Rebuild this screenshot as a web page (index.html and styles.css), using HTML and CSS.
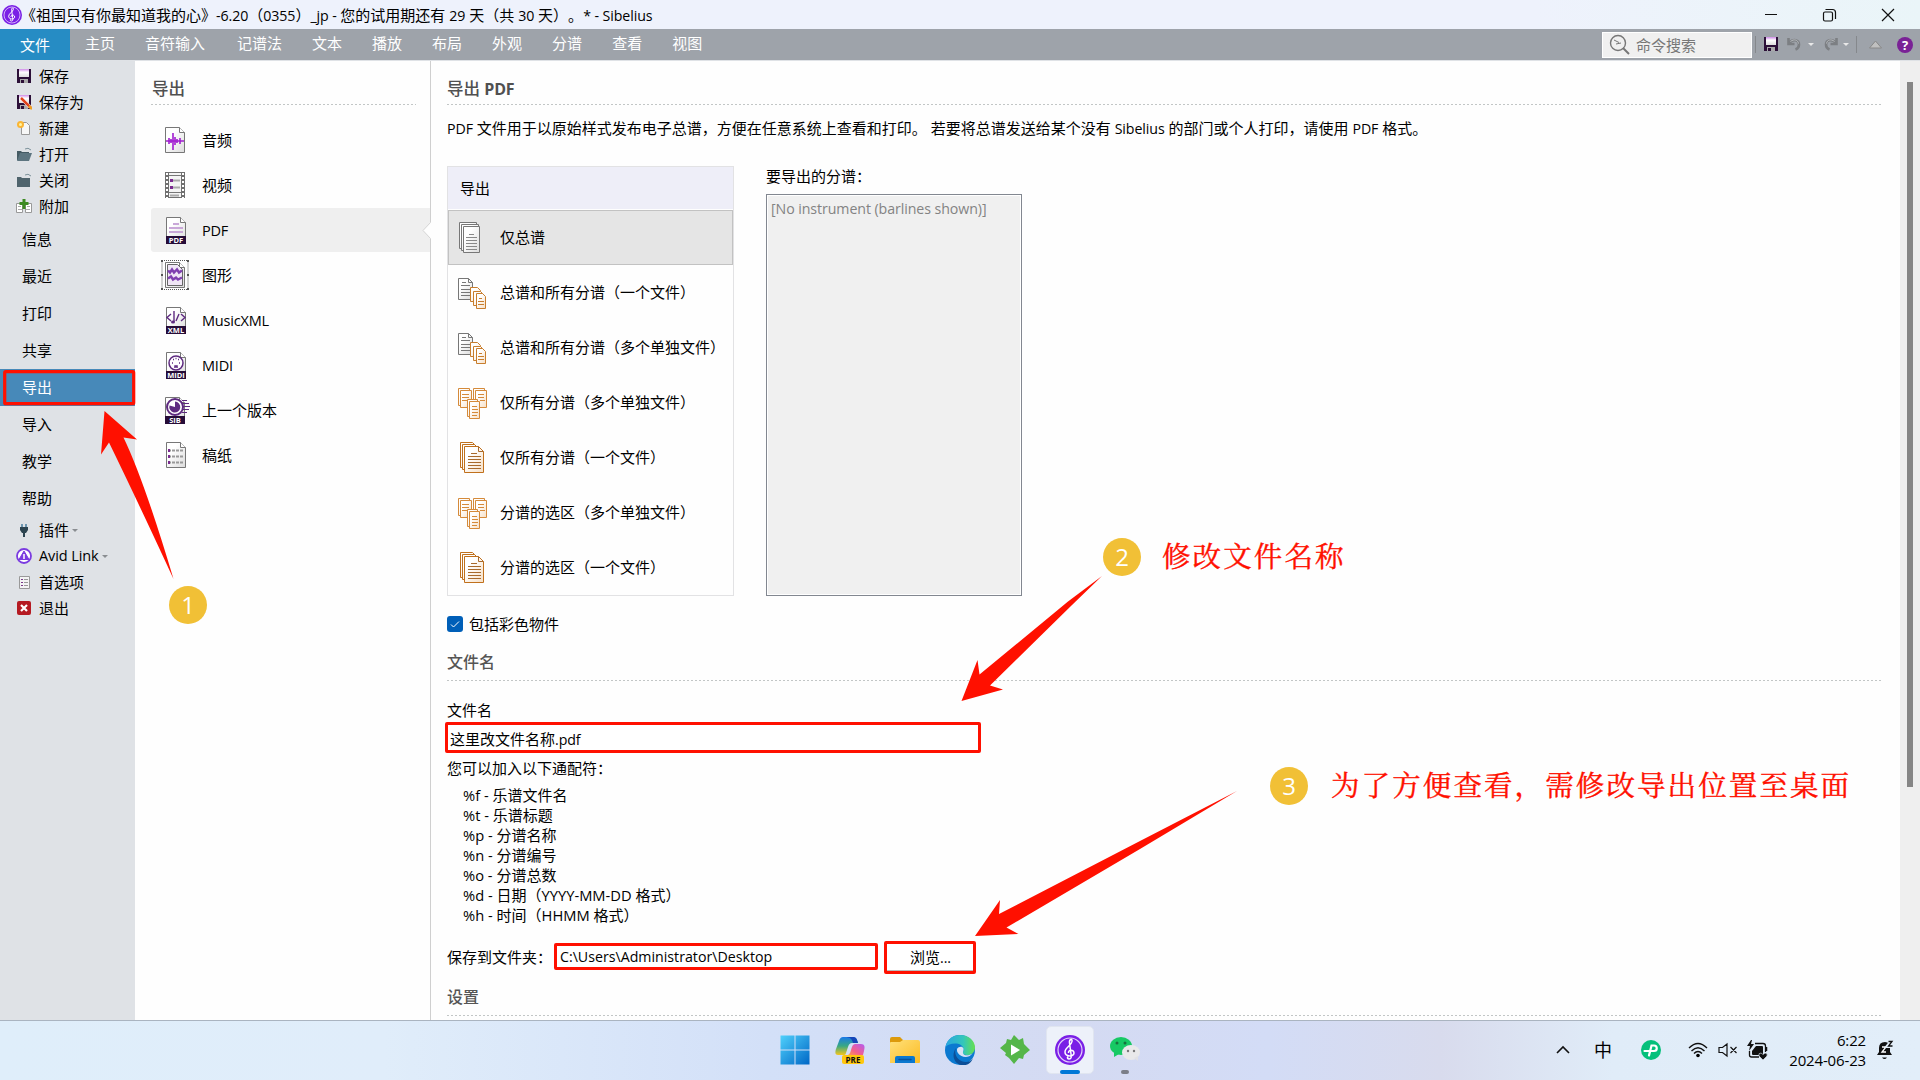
FILE: index.html
```html
<!DOCTYPE html>
<html lang="zh-CN">
<head>
<meta charset="utf-8">
<title>Sibelius</title>
<link rel="stylesheet" href="styles.css">
</head>
<body>
<svg class="defs" width="0" height="0" aria-hidden="true">
  <defs>
    <linearGradient id="paper" x1="0" y1="0" x2="1" y2="1"><stop offset=".3" stop-color="#fff"/><stop offset="1" stop-color="#dcdcdc"/></linearGradient>
    <linearGradient id="peach" x1="0" y1="0" x2="1" y2="1"><stop offset=".3" stop-color="#fff"/><stop offset="1" stop-color="#f6dfc6"/></linearGradient>
    <linearGradient id="win" x1="0" y1="0" x2="1" y2="1"><stop offset="0" stop-color="#4fd0fb"/><stop offset="1" stop-color="#0067c6"/></linearGradient>
    <linearGradient id="label" x1="0" y1="0" x2="0" y2="1"><stop offset="0" stop-color="#d08be8"/><stop offset=".4" stop-color="#fff"/><stop offset="1" stop-color="#ddd"/></linearGradient>
    <symbol id="save" viewBox="0 0 14 14"><path d="M0 0h14v14H0z" fill="#2c1038"/><path d="M2 0h10v8H2z" fill="url(#label)"/><path d="M3 10h8v4H3z" fill="#aaa"/><path d="M4 11h3v3H4z" fill="#2c1038"/></symbol>
    <symbol id="page" viewBox="0 0 20 26"><path d="M.5.5h14l5 5v20H.5z" fill="url(#paper)" stroke="#777"/><path d="M14.5.5v5h5" fill="#fff" stroke="#777"/></symbol>
    <symbol id="clef" viewBox="0 0 30 30"><circle cx="15" cy="15" r="15" fill="#7a1fe6"/><circle cx="15" cy="15" r="12" fill="none" stroke="#e3d0fb" stroke-width="1.2"/><path d="M14 24c-2 0-2-2-.5-2.500M14 24c2.500 0 2.500-2 2-5L14.500 8c-.5-4 3-5 2.500-1.500-.5 4-7 6-7 10.500 0 5 9 5 9 1 0-4-6-3.500-5.500 0" fill="none" stroke="#fff" stroke-width="1.500"/></symbol>
    <symbol id="graysheet" viewBox="0 0 32 32"><g fill="url(#paper)" stroke="#777"><path d="M2.500.5h17v26h-17z"/><path d="M4.500 2.500h17v26h-17z"/><path d="M6.500 4.500h16v26h-16z"/></g><path d="M12 12.500h5M9 15.500h11M9 18.500h11M9 21.500h11M9 24.500h11M9 27.500h11" stroke="#888"/></symbol>
    <symbol id="mixed" viewBox="0 0 32 32"><path d="M1.500 1.500h10l4 4v17h-14z" fill="url(#paper)" stroke="#777"/><path d="M11.500 1.500v4h4M5 5.500h4M4 8.500h9M4 12.500h9M4 15.500h9M4 18.500h9" fill="none" stroke="#777"/><g fill="url(#peach)" stroke="#c87e2e"><path d="M13.500 10.500h7l3 3v11h-10z"/><path d="M16.500 14.500h7l3 3v11h-10z"/><path d="M19.500 16.500h6l3 3v12h-9z"/></g><path d="M22 21.500h3M21 24.500h6M21 27.500h6" stroke="#c87e2e"/></symbol>
    <symbol id="trio" viewBox="0 0 32 32"><g fill="url(#peach)" stroke="#d58a3a"><path d="M1.500 1.500h11v17h-11z"/><path d="M3.500 3.500h11v17h-11z"/><path d="M16.500 1.500h11v17h-11z"/><path d="M18.500 3.500h11v17h-11z"/><path d="M10.500 12.500h10v17h-10z"/><path d="M12.500 14.500h10v17h-10z"/></g><path d="M5 7.500h7M5 10.500h7M5 13.500h5M21 7.500h6M21 10.500h6M23 13.500h5M15 19.500h5M15 22.500h6M15 25.500h6M15 28.500h5" stroke="#d58a3a"/></symbol>
    <symbol id="orangesheet" viewBox="0 0 32 32"><g fill="url(#peach)" stroke="#c0701c"><path d="M3.500.5h12l4 4v21h-16z"/><path d="M5.500 2.500h12l4 4v21h-16z"/><path d="M7.500 4.500h14l5 5v21h-19z"/></g><path d="M21.500 4.500v5h5M14 11.500h6M11 14.500h13M11 17.500h13M11 20.500h13M11 23.500h13M11 26.500h13" fill="none" stroke="#a86a2c"/></symbol>
    <symbol id="undo" viewBox="0 0 14 14"><path d="M1.500 1v6h6M2.500 5.500C6 1.500 12 3 12 7.500c0 2-1 4-3.500 5" fill="none" stroke="#7c7f83" stroke-width="2.600"/><path d="M3.500 4.500C7 1.500 11 3 11.500 6.500" fill="none" stroke="#b9bcbf"/></symbol>
  </defs>
</svg>

<div class="window">
  <header class="titlebar">
    <svg class="app-logo" width="20" height="20"><use href="#clef"/></svg>
    <div class="title">《祖国只有你最知道我的心》<span class="lat">-6.20</span>（<span class="lat">0355</span>）<span class="lat">_jp - </span>您的试用期还有 <span class="lat">29</span> 天（共 <span class="lat">30</span> 天）。<span class="lat">* - Sibelius</span></div>
    <svg class="win-buttons" width="134" height="16" viewBox="0 0 134 16" fill="none" stroke="#111" stroke-width="1.200"><path d="M0 7.500h12M117 2l12 12M129 2l-12 12"/><rect x="58.500" y="5" width="9" height="9" rx="1.500"/><path d="M60.500 2.500h7a3 3 0 0 1 3 3v6.500"/></svg>
  </header>

  <nav class="ribbon">
    <div class="tab active">文件</div><div class="tab">主页</div><div class="tab wide">音符输入</div><div class="tab">记谱法</div><div class="tab">文本</div><div class="tab">播放</div><div class="tab">布局</div><div class="tab">外观</div><div class="tab">分谱</div><div class="tab">查看</div><div class="tab">视图</div>
    <div class="search">
      <svg width="22" height="22" viewBox="0 0 22 22" fill="none" stroke="#777"><circle cx="9" cy="9" r="7.500" stroke-width="1.400"/><path d="M14 14l6 6" stroke-width="2"/><path d="M5 6l5 2.500M7 10l5-1"/></svg>
      <span>命令搜索</span>
    </div>
    <svg class="quick" width="164" height="30" viewBox="0 0 164 30">
      <path d="M1.500 7v17M102.500 7v17" stroke="#85888c"/>
      <use href="#save" x="10" y="8" width="14" height="14"/>
      <use href="#undo" x="33" y="8" width="14" height="14"/><path d="M54 14h6l-3 3z" fill="#e8e8e8"/>
      <use href="#undo" x="-84" y="8" width="14" height="14" transform="scale(-1 1)"/><path d="M89 14h6l-3 3z" fill="#e8e8e8"/>
      <path d="M115.500 19h12l-6-7z" fill="#c0c0c0" stroke="#888"/>
      <circle cx="151" cy="16" r="8" fill="#7a2296"/><text x="151" y="21" class="help">?</text>
    </svg>
  </nav>

  <div class="body">
    <aside class="sidebar">
      <div class="cmd"><svg width="16" height="16"><use href="#save" x="1" y="1" width="14" height="14"/></svg>保存</div>
      <div class="cmd"><svg width="16" height="16"><use href="#save" x="1" y="1" width="14" height="14"/><path d="M5 4l9 9" stroke="#fff" stroke-width="3.500"/><path d="M5 4l10 10" stroke="#e0431c" stroke-width="2.500"/><path d="M13 12l3 3" stroke="#f0a020" stroke-width="2.500"/></svg>保存为</div>
      <div class="cmd"><svg width="16" height="16"><path d="M5.500 2.500h5l3 3v9h-8z" fill="#f7f7f7" stroke="#999"/><circle cx="4.500" cy="4.500" r="3.500" fill="#fbb534"/><circle cx="4.500" cy="4.500" r="1.500" fill="#fff3a0"/></svg>新建</div>
      <div class="cmd"><svg width="16" height="16"><path d="M1 5h4l1 1h7v8H1z" fill="#455b64"/><path d="M4 7h12l-3 8H1z" fill="#5d7580"/><path d="M9 3q3-2 6 1" fill="none" stroke="#7d929b"/></svg>打开</div>
      <div class="cmd"><svg width="16" height="16"><path d="M1 5h4l1 1h8v9H1z" fill="#4f646d"/><path d="M9 3q3-2 6 1" fill="none" stroke="#7d929b"/></svg>关闭</div>
      <div class="cmd"><svg width="16" height="16"><path d="M.5 5.500h6v9h-6zM9.500 5.500h6v9h-6z" fill="#fff" stroke="#999"/><path d="M2 8.500h3M2 11.500h4M11 8.500h3M10 11.500h4" stroke="#aaa"/><path d="M8 1v10M3.500 5.500h9" stroke="#3c8a22" stroke-width="3"/></svg>附加</div>
      <div class="section first">信息</div>
      <div class="section">最近</div>
      <div class="section">打印</div>
      <div class="section">共享</div>
      <div class="section current">导出</div>
      <div class="section">导入</div>
      <div class="section">教学</div>
      <div class="section">帮助</div>
      <div class="cmd"><svg width="16" height="16"><path d="M6 2v3M10 2v3" stroke="#4a7fa0" stroke-width="1.500"/><path d="M4 5h8v3l-2 3H6L4 8z" fill="#2d4450"/><path d="M8 10v5" stroke="#2d4450" stroke-width="2"/></svg>插件<i class="caret"></i></div>
      <div class="cmd"><svg width="16" height="16"><circle cx="8" cy="8" r="7" fill="#fff" stroke="#7b3be0" stroke-width="1.800"/><path d="M8 3l5 8.500H3z" fill="#7b3be0" stroke="#7b3be0"/><path d="M8 6v5" stroke="#fff" stroke-width="1.500"/></svg><span class="avid">Avid Link</span><i class="caret"></i></div>
      <div class="cmd"><svg width="16" height="16"><path d="M3.500 2.500h10v12h-10z" fill="#f4f4f4" stroke="#999"/><path d="M5 5.500h2M5 8.500h2M5 11.500h2" stroke="#7a3a8a"/><path d="M8 5.500h4M8 8.500h4M8 11.500h4" stroke="#999"/></svg>首选项</div>
      <div class="cmd"><svg width="16" height="16"><rect x="1" y="1" width="14" height="14" rx="2" fill="#b51a22"/><path d="M5 5l6 6M11 5l-6 6" stroke="#fff" stroke-width="2.200"/></svg>退出</div>
    </aside>

    <section class="formats">
      <h2>导出</h2>
      <div class="dash"></div>
      <ul>
        <li><svg width="30" height="32"><use href="#page" x="5" y="3" width="20" height="26"/><path d="M6 17h18M9 14v6M11 15v4M13 9v17M15 13v8M17 15v4M20 14v6" stroke="#a01cd0" stroke-width="1.600"/></svg>音频</li>
        <li><svg width="30" height="32"><path d="M5 3h20v26H5z" fill="#707070"/><path d="M9 4h12v24H9z" fill="#f4f4f4"/><path d="M7 4v25M23 4v25" stroke="#fff" stroke-width="2" stroke-dasharray="2 2"/><path d="M9 6.500h12M9 23.500h12" stroke="#777"/><path d="M10 11.500h10M10 18.500h10M10 26.500h9" stroke="#aaa" stroke-width="2"/><path d="M10 11.500h3M10 18.500h3" stroke="#7a2a90" stroke-width="3"/></svg>视频</li>
        <li class="selected"><svg width="30" height="32"><use href="#page" x="6" y="3" width="20" height="26"/><path d="M13 10h6M9 14h14M9 18h14" stroke="#c9a8d8" stroke-width="2"/><path d="M6 22h20v8H6z" fill="#260c38"/><text x="16" y="29" class="tag">PDF</text></svg><span>PDF</span></li>
        <li><svg width="30" height="32"><path d="M2 1.500h26v29H2z" fill="none" stroke="#555" stroke-dasharray="1 1"/><path d="M1 1h2v2H1zM27 1h2v2h-2zM1 15h2v2H1zM27 15h2v2h-2zM1 29h2v2H1zM27 29h2v2h-2z" fill="#555"/><use href="#page" x="5" y="3" width="20" height="26"/><path d="M7.500 5.500h10l5 5v16h-15z" fill="#f0e6f6" stroke="#666"/><path d="M8 11.500l2 2 2-3 2 3 3-3 2 3 3-2M8 19.500l3-2 2 3 3-2 2 2 4-2" fill="none" stroke="#8040b0" stroke-width="2.400"/></svg>图形</li>
        <li><svg width="30" height="32"><use href="#page" x="6" y="3" width="20" height="26"/><path d="M11 10l-4 3.500 4 3.500M21 10l4 3.500-4 3.500M19 10l-3 7M14 7v11" fill="none" stroke="#5e2a80" stroke-width="1.400"/><ellipse cx="13" cy="18" rx="2" ry="1.500" fill="#5e2a80"/><path d="M6 22h20v8H6z" fill="#260c38"/><text x="16" y="29" class="tag">XML</text></svg><span>MusicXML</span></li>
        <li><svg width="30" height="32"><use href="#page" x="6" y="3" width="20" height="26"/><circle cx="16" cy="14" r="7" fill="#fff" stroke="#5e2a80" stroke-width="1.500"/><path d="M12 14h1M19 14h1M13 10.500h1M18 10.500h1M15.500 9.500h1M15 19v-2h2v2" fill="none" stroke="#5e2a80" stroke-width="1.500"/><path d="M6 22h20v8H6z" fill="#260c38"/><text x="16" y="29" class="tag">MIDI</text></svg><span>MIDI</span></li>
        <li><svg width="30" height="32"><use href="#page" x="5" y="3" width="20" height="26"/><path d="M22 6.500h5M23 9.500h6M23 12.500h7M23 15.500h6M22 18.500h5" stroke="#5e2a80"/><circle cx="15" cy="13" r="8" fill="#fff" stroke="#5e2a80" stroke-width="2"/><path d="M15 13V7.500a5.500 5.500 0 1 1-5.500 4z" fill="#5e2a80"/><path d="M5 22h20v8H5z" fill="#260c38"/><text x="15" y="29" class="tag">SIB</text></svg>上一个版本</li>
        <li><svg width="30" height="32"><use href="#page" x="6" y="3" width="20" height="26"/><path d="M8 11.500h16M8 17.500h16M8 23.500h16" stroke="#999" stroke-width="2" stroke-dasharray="3 1"/><path d="M9 10v3M9 16v3M9 22v3" stroke="#7a2a90" stroke-width="2"/></svg>稿纸</li>
      </ul>
    </section>

    <main class="main">
      <svg class="notch" width="9" height="17" viewBox="0 0 9 17"><path d="M9 0L1 8.500 9 17z" fill="#fefefe"/><path d="M8.500.5L1 8.500l7.500 8" fill="none" stroke="#d4d4d4"/></svg>
      <h1>导出 <b>PDF</b></h1>
      <div class="dash"></div>
      <p class="intro"><span class="lat">PDF</span> 文件用于以原始样式发布电子总谱，方便在任意系统上查看和打印。 若要将总谱发送给某个没有 <span class="lat">Sibelius</span> 的部门或个人打印，请使用 <span class="lat">PDF</span> 格式。</p>
      <div class="choices">
        <div class="modes">
          <div class="modes-head">导出</div>
          <div class="mode on"><svg width="32" height="32"><use href="#graysheet"/></svg><span>仅总谱</span></div>
          <div class="mode"><svg width="32" height="32"><use href="#mixed"/></svg><span>总谱和所有分谱（一个文件）</span></div>
          <div class="mode"><svg width="32" height="32"><use href="#mixed"/></svg><span>总谱和所有分谱（多个单独文件）</span></div>
          <div class="mode"><svg width="32" height="32"><use href="#trio"/></svg><span>仅所有分谱（多个单独文件）</span></div>
          <div class="mode"><svg width="32" height="32"><use href="#orangesheet"/></svg><span>仅所有分谱（一个文件）</span></div>
          <div class="mode"><svg width="32" height="32"><use href="#trio"/></svg><span>分谱的选区（多个单独文件）</span></div>
          <div class="mode"><svg width="32" height="32"><use href="#orangesheet"/></svg><span>分谱的选区（一个文件）</span></div>
        </div>
        <div class="parts">
          <label>要导出的分谱：</label>
          <div class="listbox"><span class="lat">[No instrument (barlines shown)]</span></div>
        </div>
      </div>
      <div class="check"><svg width="16" height="16"><rect width="16" height="16" rx="3" fill="#005fb8"/><path d="M4 8.500l2.500 2.500L12 5.500" fill="none" stroke="#fff"/></svg>包括彩色物件</div>
      <h3>文件名</h3>
      <div class="dash"></div>
      <div class="field-label">文件名</div>
      <div class="marked filename">这里改文件名称<span class="lat">.pdf</span></div>
      <div class="hint">您可以加入以下通配符：</div>
      <ul class="tokens">
        <li><span class="lat">%f -</span> 乐谱文件名</li>
        <li><span class="lat">%t -</span> 乐谱标题</li>
        <li><span class="lat">%p -</span> 分谱名称</li>
        <li><span class="lat">%n -</span> 分谱编号</li>
        <li><span class="lat">%o -</span> 分谱总数</li>
        <li><span class="lat">%d -</span> 日期（<span class="lat">YYYY-MM-DD</span> 格式）</li>
        <li><span class="lat">%h -</span> 时间（<span class="lat">HHMM</span> 格式）</li>
      </ul>
      <div class="folder">
        <span class="folder-label">保存到文件夹：</span>
        <div class="marked path"><span class="lat">C:\Users\Administrator\Desktop</span></div>
        <div class="marked browse">浏览<span class="lat">...</span></div>
      </div>
      <h3 class="settings">设置</h3>
      <div class="dash"></div>
    </main>
    <div class="scroll"><div class="thumb"></div></div>
  </div>

  <footer class="taskbar">
    <div class="apps">
      <div class="app"><svg width="30" height="30"><path d="M.5.500h14v14h-14zM15.500.5h14v14h-14zM.5 15.500h14v14h-14zM15.500 15.500h14v14h-14z" fill="url(#win)"/></svg></div>
      <div class="app"><svg width="30" height="30" viewBox="0 0 30 30"><defs><linearGradient id="cp1" x1="0" y1="0" x2="0" y2="1"><stop offset="0" stop-color="#1a7ae8"/><stop offset=".5" stop-color="#39a883"/><stop offset="1" stop-color="#f5c61d"/></linearGradient><linearGradient id="cp2" x1="1" y1="0" x2="0" y2="1"><stop offset="0" stop-color="#b45cf2"/><stop offset=".6" stop-color="#f4608c"/><stop offset="1" stop-color="#ffa04c"/></linearGradient></defs><path d="M8 2h10c3 0 4 2 5 6h-6c-2 0-3 1-4 4l-2 6c-.5 2-1 2-3 2H3c-3 0-3-3-2-6l3-8c1-3 2-4 4-4z" fill="url(#cp1)"/><path d="M10 2h8c3 0 4 2 5 6h-5c-1-4-3-6-8-6z" fill="#1546b8"/><path d="M20 9h6c4 0 4 3 3 7l-1 4H12c2 0 3-1 4-5 1-4 2-6 4-6z" fill="url(#cp2)"/><rect x="7" y="20" width="22" height="9" rx="2" fill="#ffc70e"/><text x="18" y="27.500" class="pre">PRE</text></svg></div>
      <div class="app"><svg width="30" height="30"><defs><linearGradient id="fo" x1="0" y1="0" x2="1" y2="1"><stop offset="0" stop-color="#ffe07a"/><stop offset="1" stop-color="#fcbc24"/></linearGradient></defs><path d="M0 4a2 2 0 0 1 2-2h8l3 3h10v8H0z" fill="#dc9a0c"/><path d="M0 8q0-1 1-1h9l3-2h15q2 0 2 2v20q0 1-1 1H0z" fill="url(#fo)"/><path d="M5 28v-5q0-2 2-2h16q2 0 2 2v5z" fill="#0b78cf"/><path d="M9 24.500h12" stroke="#07529b" stroke-width="1.500" stroke-linecap="round"/></svg></div>
      <div class="app"><svg width="30" height="30" viewBox="0 0 30 30"><defs><linearGradient id="e1"><stop offset="0" stop-color="#2aa6e0"/><stop offset=".6" stop-color="#33c6bb"/><stop offset="1" stop-color="#66e04e"/></linearGradient></defs><circle cx="15" cy="15" r="15" fill="#0b79d0"/><path d="M.5 12C2 4 8 0 15 0c9 0 15 6 15 12.500 0 5-4 7.500-7.500 7.500S17 18.500 18 17c2-3-.5-7.500-6-8.500C7 8 2.500 9.500.5 12z" fill="url(#e1)"/><path d="M11 13c-3 7 3 14 10 14 3 0 5-1 7-4-2 6-7 8-12 7C9 28.500 6 20 11 13z" fill="#0c4f98"/><path d="M12 14c1.500-2.500 5.500-3 6.500-.5.500 2-1 3-.5 4.500.5 3 6 3 9.500.5-3 4-8 4-11 2.500-3-1.500-5-4-4.500-7z" fill="#d9e2f5"/></svg></div>
      <div class="app"><svg width="30" height="30"><path d="M14 0l5 5 4-2 1 6 6 6-6 5-1 4-4-1-5 6-5-6-4-3 1-2-6-5 6-5 1-4 4 1z" fill="#55b649"/><path d="M11 9.500l9 5.500-9 5.500z" fill="#fff"/></svg></div>
      <div class="app active"><svg width="30" height="30"><use href="#clef"/></svg></div>
      <div class="app running"><svg width="30" height="30"><ellipse cx="11" cy="11" rx="11" ry="9" fill="#17c964"/><path d="M4 17l0 5 5-3z" fill="#17c964"/><circle cx="7" cy="8" r="1.500" fill="#16733f"/><circle cx="15" cy="8" r="1.500" fill="#16733f"/><ellipse cx="21" cy="17.500" rx="9" ry="7.500" fill="#e9e9ea"/><path d="M24 23l4 3 0-5z" fill="#e2e2e4"/><circle cx="18" cy="16" r="1.200" fill="#777"/><circle cx="24" cy="16" r="1.200" fill="#777"/></svg></div>
    </div>
    <div class="tray">
      <svg width="16" height="16"><path d="M2 11l6-6 6 6" fill="none" stroke="#111" stroke-width="1.600"/></svg>
      <span class="ime">中</span>
      <svg class="green" width="20" height="20"><circle cx="10" cy="10" r="10" fill="#05c07b"/><path d="M8 15.500L10.500 5.500H13a2.500 2.500 0 0 1 0 5.500H3.500" fill="none" stroke="#fff" stroke-width="2.200" stroke-linecap="round"/></svg>
      <svg class="wifi" width="20" height="16"><g fill="none" stroke="#111" stroke-width="1.400"><path d="M1 6q9-9 18 0M3.500 9q6.500-6.500 13 0M6 11.500q4-4 8 0"/></g><circle cx="10" cy="13.500" r="1.800"/></svg>
      <svg class="vol" width="20" height="16"><path d="M1 5.500h3.500L9 2v12l-4.500-3.500H1zM12.500 5l6 6M18.500 5l-6 6" fill="none" stroke="#111" stroke-width="1.200"/></svg>
      <svg class="batt" width="22" height="22"><path d="M9 7h6q1 0 1 1v8H6q-1 0-1-1v-3z" fill="#111"/><path d="M8 4.500h8q2.500 0 2.500 2.500v6M2.500 12v4q0 2 2 2H12" fill="none" stroke="#111" stroke-width="1.300"/><path d="M19.500 8v4" stroke="#111" stroke-width="1.500"/><path d="M4 1L0 7h3l-1 5 5-7H4l1-4z" fill="#111"/><path d="M16 21l-4-4q-1-3 2-3l2 1.500 2-1.500q3 0 2 3z" fill="#111" stroke="#e3eef9" stroke-width=".6"/></svg>
      <div class="clock"><span>6:22</span><span>2024-06-23</span></div>
      <svg class="bell" width="18" height="20"><path d="M1 15l2-3V8q0-6 6-6 5 0 5 6v4l2 3z" fill="#111"/><path d="M6 17.500h5q-2.500 3-5 0z" fill="#111"/><path d="M6 7h4l-4 5h4" fill="none" stroke="#fff" stroke-width="1.300"/><path d="M12 1h4l-4 5h4" fill="none" stroke="#e3eef9" stroke-width="4"/><path d="M12.500 1.500h3.500l-3.500 4.500h4" fill="none" stroke="#111" stroke-width="1.300"/></svg>
    </div>
  </footer>
</div>

<div class="annotations">
  <svg width="1920" height="1080" viewBox="0 0 1920 1080">
    <g fill="#ff1000">
      <path d="M104.500 411L137 439.500 123.500 437.500Q144 480 173.500 579 138 502 109 442.500L101 454.500z"/>
      <path d="M961.500 701L977.500 660 979.500 674.500 1068 601.500 1102 576 1072 605 990 685.500 1003 689.500z"/>
      <path d="M975 936L1000 900 999 914 1140 841 1237 791 1140 849 1006.500 927.500 1018.500 934z"/>
    </g>
    <rect x="4.700" y="371.700" width="129" height="32" rx="1" fill="none" stroke="#ff1000" stroke-width="3.200"/>
  </svg>
  <div class="badge b1">1</div>
  <div class="badge b2">2</div>
  <div class="badge b3">3</div>
  <div class="note n2">修改文件名称</div>
  <div class="note n3">为了方便查看，需修改导出位置至桌面</div>
</div>
</body>
</html>
```
FILE: styles.css
```css
* { box-sizing: border-box; }
body {
  margin: 0;
  width: 1920px;
  height: 1080px;
  overflow: hidden;
  position: relative;
  background: #fefefe;
  color: #000;
  font: 15px/20px "Open Sans", "Noto Sans CJK SC", sans-serif;
  text-spacing-trim: space-all;
  white-space: nowrap;
}
h1, h2, h3, p, ul { margin: 0; padding: 0; font-weight: normal; }
ul { list-style: none; }
svg { display: block; flex: none; }
.defs { position: absolute; }
.lat { font-size: 14.200px; letter-spacing: -0.080px; line-height: 1px; }
.window { display: flex; flex-direction: column; height: 1080px; }

/* title bar */
.titlebar {
  display: flex;
  align-items: center;
  height: 29px;
  padding-left: 2px;
  background: linear-gradient(90deg, #eef2fc 80%, #eaf5f8);
}
.title { flex: 1; margin-left: -1px; }
.win-buttons { margin-right: 21px; }

/* ribbon */
.ribbon {
  display: flex;
  height: 32px;
  background: #9ea3aa;
  border-bottom: 1px solid #dfe2e6;
}
.tab {
  padding: 0 15px;
  color: #fff;
  line-height: 29px;
}
.tab.active { width: 70px; padding: 0; text-align: center; line-height: 32px; background: #268cc4; }
.tab.wide { padding-right: 17px; }
.search {
  display: flex;
  align-items: center;
  gap: 5px;
  width: 150px;
  height: 26px;
  margin: 3px 2px 0 auto;
  padding-left: 6px;
  background: #f0f0f0;
  border: 1px solid #fff;
  color: #777;
}
.help { font: bold 13px "Open Sans", sans-serif; fill: #fff; text-anchor: middle; }
.quick { margin-right: 2px; }

/* backstage */
.body { display: flex; height: 959px; }
.sidebar { width: 135px; padding-top: 2px; background: #dfe2e6; }
.cmd {
  display: flex;
  align-items: center;
  gap: 7px;
  height: 26px;
  padding-left: 16px;
}
.avid { font-size: 14.500px; letter-spacing: -0.100px; }
.caret {
  margin-left: -4px;
  border: 3px solid transparent;
  border-top-color: #8a8d91;
  border-bottom: 0;
}
.section { height: 37px; padding-left: 22px; line-height: 36px; }
.section.first { margin-top: 2px; }
.section.current { background: #4789b9; color: #fff; }

.dash {
  height: 1px;
  background: repeating-linear-gradient(90deg, #c2c6c6 0 2px, transparent 2px 4px);
}
.formats { width: 295px; padding-left: 16px; }
h1, h2 { height: 43px; padding-top: 18px; font-size: 16.500px; line-height: 20px; font-weight: 500; color: #505050; }
h2 { padding-left: 1px; }
.formats .dash { width: 265px; }
.formats ul { margin-top: 13px; }
.formats li {
  display: flex;
  align-items: center;
  gap: 12px;
  height: 44px;
  margin-bottom: 1px;
  padding-left: 9px;
}
.formats li.selected { background: #efefef; border-radius: 3px 0 0 3px; }
.formats li span { padding-top: 2px; font-size: 14.500px; letter-spacing: -0.200px; }
.tag { font: bold 7.500px "Open Sans", sans-serif; fill: #fff; text-anchor: middle; }
.pre { font: bold 8px "Open Sans", sans-serif; fill: #111; text-anchor: middle; }

.main {
  position: relative;
  width: 1470px;
  padding-left: 16px;
  border-left: 1px solid #cfcfcf;
}
.notch { position: absolute; left: -9px; top: 161px; }
.main > .dash { width: 1434px; }
h1 b { font-size: 16px; line-height: 1px; letter-spacing: -0.200px; }
.intro { height: 20px; margin-top: 13px; }
.choices { display: flex; gap: 32px; margin-top: 28px; }
.modes { width: 287px; height: 430px; border: 1px solid #e2e2e4; }
.modes-head { height: 42px; margin-bottom: 1px; padding-left: 12px; line-height: 43px; background: #eeeef8; }
.mode { display: flex; align-items: center; gap: 11px; height: 55px; padding-left: 9px; }
.mode span { padding-bottom: 2px; }
.mode.on { background: #e5e5e5; border: 1px solid #c2c2c2; padding-left: 8px; }
.parts { width: 256px; }
.parts label { display: block; height: 28px; line-height: 20px; }
.listbox {
  height: 402px;
  padding: 3px 4px;
  border: 1px solid #828790;
  box-shadow: inset 0 0 0 1px #fff;
  background: #f0f0f0;
  color: #838383;
}
.check { display: flex; align-items: center; gap: 6px; height: 20px; margin-top: 18px; }
h3 { height: 46px; padding-top: 18px; font-size: 16px; font-weight: 500; color: #555; }
.field-label { height: 41px; padding-top: 19px; }
.marked {
  border: 3px solid #ff1000;
  border-radius: 2px;
  background: #fff;
}
.filename { width: 536px; height: 31px; margin-left: -2px; padding-left: 2px; line-height: 28px; }
.hint { height: 33px; padding-top: 5px; }
.tokens { padding: 0 0 0 16px; height: 154px; }
.tokens li { height: 20px; line-height: 18px; }
.tokens .lat { font-size: 14.700px; letter-spacing: 0; }
.folder { display: flex; height: 33px; margin-top: 1px; }
.folder-label { width: 107px; line-height: 33px; }
.path { width: 324px; height: 27px; margin: 2px 6px 0 0; padding-left: 3px; line-height: 21px; }
.path .lat { letter-spacing: 0; }
.browse { width: 92px; height: 33px; line-height: 27px; padding-left: 1px; text-align: center; box-shadow: inset 0 -1px #bbb; }
h3.settings { height: 41px; padding-top: 13px; }
.scroll { width: 20px; padding: 21px 0 0 7px; background: #efefef; }
.thumb { width: 6px; height: 705px; background: #868686; }

/* taskbar */
.taskbar {
  position: relative;
  display: flex;
  justify-content: flex-end;
  height: 60px;
  border-top: 1px solid #aab4c0;
  background: linear-gradient(90deg, #dfeefa 0, #e0edfa 20%, #d3e0f8 40%, #d4daf2 56%, #d3dcf6 66%, #d8dbed 75%, #e0ecf8 84%, #e2eef9);
}
.apps { display: flex; gap: 7px; width: 380px; margin: 5px 404px 0 0; }
.app { display: flex; flex: none; width: 48px; height: 48px; align-items: center; justify-content: center; flex-direction: column; }
.app.active { background: #edf1fa; border: 1px solid #e0e5f0; border-radius: 5px; padding-top: 6px; }
.app.active::after { content: ""; width: 20px; height: 4px; margin: 5px 0 -2px; border-radius: 2px; background: #0078d7; }
.app.running::after { content: ""; width: 8px; height: 4px; margin: 5px 0 -5px; border-radius: 2px; background: #7b7e88; }
.app.running { padding-top: 4px; }
.tray { display: flex; align-items: center; width: 365px; height: 58px; }
.ime { width: 18px; margin-left: 23px; font-size: 18px; }
.green { margin-left: 29px; }
.wifi { margin-left: 27px; }
.vol { margin-left: 10px; }
.batt { margin-left: 9px; }
.clock { display: flex; flex-direction: column; width: 82px; margin-left: 15px; text-align: right; font-size: 15px; letter-spacing: -0.150px; }
.bell { margin-left: 10px; }

/* tutorial marks drawn over the window */
.annotations { position: absolute; inset: 0; pointer-events: none; }
.badge {
  position: absolute;
  width: 38px;
  height: 38px;
  border-radius: 50%;
  background: #f1c036;
  color: #fff;
  font-size: 24px;
  line-height: 37px;
  text-align: center;
}
.b1 { left: 169px; top: 586px; }
.b2 { left: 1103px; top: 538px; }
.b3 { left: 1270px; top: 767px; }
.note {
  position: absolute;
  color: #ff1000;
  font-family: "Noto Serif CJK SC", "Noto Sans CJK SC", serif;
  font-size: 28.500px;
  line-height: 40px;
  letter-spacing: 2.100px;
  -webkit-text-stroke: 0.400px #ff1000;
}
.n2 { left: 1162px; top: 535px; }
.n3 { left: 1331px; top: 764px; }
```
